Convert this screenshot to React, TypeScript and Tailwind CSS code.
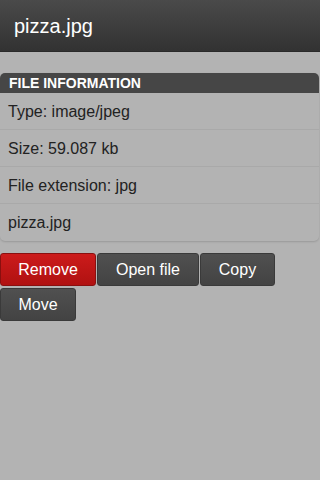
export default function App() {
  const rows = ["Type: image/jpeg", "Size: 59.087 kb", "File extension: jpg", "pizza.jpg"];
  return (
    <main className="min-h-[480px] w-[320px] bg-[#b3b3b3] font-['Liberation_Sans',Arial,sans-serif]">
      <header className="flex h-[52px] items-center bg-gradient-to-b from-[#4a4a4a] to-[#323232] px-[14px] border-b border-[#2a2a2a]">
        <h1 className="text-[20px] text-white">pizza.jpg</h1>
      </header>
      <section className="mt-[21px] mr-[1px] rounded-[5px] shadow-[0_1px_2px_rgba(0,0,0,0.15)]">
        <div className="flex h-[20px] items-center rounded-t-[5px] bg-[#464646] px-[9px] text-[14px] font-bold text-white">
          FILE INFORMATION
        </div>
        <ul>
          {rows.map((r, i) => (
            <li
              key={i}
              className={`flex h-[37px] items-center px-[8px] pt-[1px] text-[16px] text-[#222] ${i < rows.length - 1 ? "border-b border-[#a9a9a9]" : "rounded-b-[5px]"}`}
            >
              {r}
            </li>
          ))}
        </ul>
      </section>
      <div className="mt-[12px] flex flex-wrap gap-x-[1px] gap-y-[1px]">
        <button className="h-[33px] w-[96px] rounded-[3px] border border-[#8a0f0f] bg-gradient-to-b from-[#cc1b1b] to-[#b01111] text-[16px] text-white">
          Remove
        </button>
        <button className="h-[33px] w-[102px] rounded-[3px] border border-[#3a3a3a] bg-gradient-to-b from-[#505050] to-[#434343] text-[16px] text-white">
          Open file
        </button>
        <button className="h-[33px] w-[75px] rounded-[3px] border border-[#3a3a3a] bg-gradient-to-b from-[#505050] to-[#434343] text-[16px] text-white">
          Copy
        </button>
        <div className="basis-full h-0" />
        <button className="h-[33px] w-[76px] rounded-[3px] border border-[#3a3a3a] bg-gradient-to-b from-[#505050] to-[#434343] text-[16px] text-white">
          Move
        </button>
      </div>
    </main>
  );
}
